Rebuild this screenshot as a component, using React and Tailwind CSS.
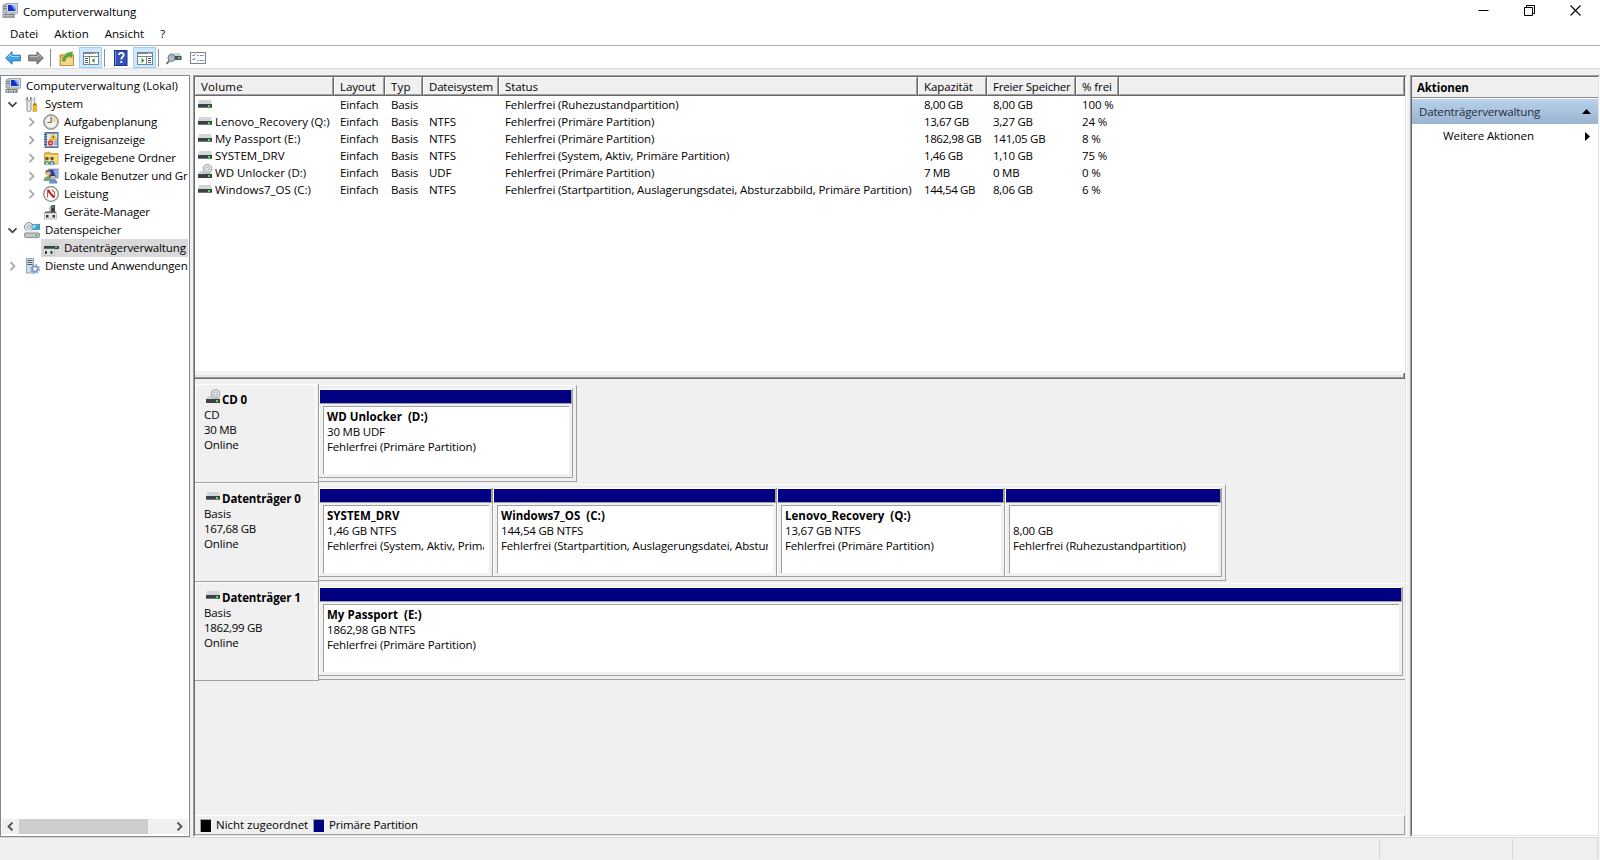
const menuItems = ["Datei", "Aktion", "Ansicht", "?"]

const treeItems = [
  { label: "System", icon: "tools", level: 1, state: "open" },
  { label: "Aufgabenplanung", icon: "clock", level: 2, state: "closed" },
  { label: "Ereignisanzeige", icon: "events", level: 2, state: "closed" },
  { label: "Freigegebene Ordner", icon: "shared", level: 2, state: "closed" },
  { label: "Lokale Benutzer und Gruppen", icon: "users", level: 2, state: "closed" },
  { label: "Leistung", icon: "gauge", level: 2, state: "closed" },
  { label: "Geräte-Manager", icon: "device", level: 2 },
  { label: "Datenspeicher", icon: "storage", level: 1, state: "open" },
  { label: "Datenträgerverwaltung", icon: "diskmgmt", level: 2, selected: true },
  { label: "Dienste und Anwendungen", icon: "services", level: 1, state: "closed" }
]

const columns = [
  { key: "name", label: "Volume", width: "w-[139px]", text: "tracking-[0.01px]", head: "tracking-[0.15px]" },
  { key: "layout", label: "Layout", width: "w-[51px]" },
  { key: "type", label: "Typ", width: "w-[38px]", head: "tracking-[0.2px]" },
  { key: "fs", label: "Dateisystem", width: "w-[76px]", head: "tracking-[-0.2px]" },
  { key: "status", label: "Status", width: "w-[419px]", text: "tracking-[-0.12px]" },
  { key: "capacity", label: "Kapazität", width: "w-[69px]", text: "tracking-[-0.4px]" },
  { key: "free", label: "Freier Speicher", width: "w-[89px]", text: "tracking-[-0.25px]", head: "tracking-[-0.2px]" },
  { key: "percent", label: "% frei", width: "w-[43px]" }
]

const volumes = [
  { name: "", layout: "Einfach", type: "Basis", fs: "", status: "Fehlerfrei (Ruhezustandpartition)", capacity: "8,00 GB", free: "8,00 GB", percent: "100 %" },
  { name: "Lenovo_Recovery (Q:)", layout: "Einfach", type: "Basis", fs: "NTFS", status: "Fehlerfrei (Primäre Partition)", capacity: "13,67 GB", free: "3,27 GB", percent: "24 %" },
  { name: "My Passport (E:)", layout: "Einfach", type: "Basis", fs: "NTFS", status: "Fehlerfrei (Primäre Partition)", capacity: "1862,98 GB", free: "141,05 GB", percent: "8 %" },
  { name: "SYSTEM_DRV", layout: "Einfach", type: "Basis", fs: "NTFS", status: "Fehlerfrei (System, Aktiv, Primäre Partition)", capacity: "1,46 GB", free: "1,10 GB", percent: "75 %" },
  { name: "WD Unlocker (D:)", layout: "Einfach", type: "Basis", fs: "UDF", status: "Fehlerfrei (Primäre Partition)", capacity: "7 MB", free: "0 MB", percent: "0 %", cd: true },
  { name: "Windows7_OS (C:)", layout: "Einfach", type: "Basis", fs: "NTFS", status: "Fehlerfrei (Startpartition, Auslagerungsdatei, Absturzabbild, Primäre Partition)", capacity: "144,54 GB", free: "8,06 GB", percent: "6 %" }
]

const disks = [
  {
    name: "CD 0", type: "CD", size: "30 MB", cd: true, width: "w-[258px] border-r",
    partitions: [
      { name: "WD Unlocker  (D:)", size: "30 MB UDF", status: "Fehlerfrei (Primäre Partition)", width: "w-[254px]" }
    ]
  },
  {
    name: "Datenträger 0", type: "Basis", size: "167,68 GB", width: "w-[907px] border-r",
    partitions: [
      { name: "SYSTEM_DRV", size: "1,46 GB NTFS", status: "Fehlerfrei (System, Aktiv, Primäre Partition)", width: "w-[174px]" },
      { name: "Windows7_OS  (C:)", size: "144,54 GB NTFS", status: "Fehlerfrei (Startpartition, Auslagerungsdatei, Absturzabbild, Primäre Partition)", width: "w-[284px]" },
      { name: "Lenovo_Recovery  (Q:)", size: "13,67 GB NTFS", status: "Fehlerfrei (Primäre Partition)", width: "w-[228px]" },
      { name: "", size: "8,00 GB", status: "Fehlerfrei (Ruhezustandpartition)", width: "w-[217px]" }
    ]
  },
  {
    name: "Datenträger 1", type: "Basis", size: "1862,99 GB", width: "w-[1086px]",
    partitions: [
      { name: "My Passport  (E:)", size: "1862,98 GB NTFS", status: "Fehlerfrei (Primäre Partition)", width: "w-[1084px]" }
    ]
  }
]

function Svg({ children, w = 16, h = 16, className = "" }) {
  return (
    <svg width={w} height={h} viewBox={`0 0 ${w} ${h}`} className={`block shrink-0 ${className}`}>
      {children}
    </svg>
  )
}

function ComputerIcon() {
  return (
    <Svg>
      <path d="M1 2l4-1.500v10l-4-.5z" fill="#b9bec4" stroke="#80868d" strokeWidth=".7" />
      <path d="M1.500 3.500h3M1.500 5.500h3" stroke="#666c72" strokeWidth=".8" />
      <rect x="4.500" y=".5" width="11" height="9.500" fill="#d3d7dc" stroke="#a2a9b1" />
      <rect x="6" y="2" width="8" height="6" fill="#1230c4" />
      <path d="M9 2h5v6h-1z" fill="#6f93f0" />
      <path d="M11 2h3v4z" fill="#b5caff" />
      <path d="M7 10h7l1 1.500H6z" fill="#b5babf" />
      <rect x=".5" y="11" width="12" height="4" fill="#7c858d" />
      <path d="M1.500 12.500h10M1.500 14h10" stroke="#dfe3e6" strokeDasharray="1.500 1" />
      <rect x="9" y="10" width="2" height="1" fill="#d2c04a" />
    </Svg>
  )
}

function DriveIcon({ cd }) {
  return (
    <Svg w={15} h={15}>
      {cd ? (
        <>
          <path d="M2 7h10l2 3H0z" fill="#cfd1d4" />
          <circle cx="9.500" cy="4.800" r="4.300" fill="#dcdfe1" stroke="#9da2a5" />
          <circle cx="9.500" cy="4.800" r="1.700" fill="#fff" stroke="#a6aaad" />
          <rect x="0" y="10" width="14" height="4" fill="#3c4145" />
          <rect x="10" y="11" width="2" height="2" fill="#3df03d" />
        </>
      ) : (
        <>
          <path d="M1 4h12l1 4H0z" fill="#d2d5d9" />
          <rect x="0" y="8" width="14" height="4" fill="#3c4145" />
          <rect x="0" y="11.300" width="14" height=".7" fill="#8a8f93" />
          <rect x="10" y="9" width="2" height="2" fill="#3df03d" />
        </>
      )}
    </Svg>
  )
}

function TreeIcon({ name }) {
  switch (name) {
    case "tools":
      return (
        <Svg>
          <path d="M3.500 1v3l1.500 1L6.500 4V1c1.600.8 2 3.300.5 4.800V14c0 2-4 2-4 0V5.800C1.500 4.300 1.900 1.800 3.500 1z" fill="#e7e9eb" stroke="#7b8085" strokeWidth=".9" />
          <path d="M10.500 1v7" stroke="#a8adb2" strokeWidth="1.500" />
          <rect x="9" y="7.500" width="3.500" height="1.500" fill="#a06d12" />
          <path d="M8.800 9h4l-.5 2 .5 4c-.5 1-3.500 1-4 0l.5-4z" fill="#f4b91e" stroke="#c98d10" strokeWidth=".6" />
        </Svg>
      )
    case "clock":
      return (
        <Svg>
          <circle cx="8" cy="8" r="7.300" fill="#c5c9cc" stroke="#777d82" strokeWidth="1" />
          <circle cx="8" cy="8" r="5.700" fill="#f6f4e6" />
          <path d="M8 8V2.300A5.700 5.700 0 0 1 13.700 8z" fill="#f6d9a0" />
          <path d="M8 3v5.500H4.500" fill="none" stroke="#4d6488" strokeWidth="1.100" />
        </Svg>
      )
    case "events":
      return (
        <Svg>
          <rect x="2" y=".5" width="13" height="15" fill="#7f9cc8" stroke="#5b7297" />
          <rect x="4" y="2" width="10" height="12" fill="#dbe5f4" />
          <path d="M1 2.500h3M1 5h3M1 7.500h3M1 10h3M1 12.500h3" stroke="#4c5a6d" />
          <path d="M10 1.500l4 6.500H6.500z" fill="#ffd530" stroke="#c49a0c" strokeWidth=".6" />
          <path d="M10.200 4v2M10.200 6.700v.7" stroke="#333" />
          <circle cx="7.500" cy="11" r="2.700" fill="#d8362d" />
          <path d="M6.500 10l2 2M8.500 10l-2 2" stroke="#fff" strokeWidth=".7" />
          <path d="M11 10h3M11 12h3" stroke="#5f7aa8" />
        </Svg>
      )
    case "shared":
      return (
        <Svg>
          <path d="M1.500 3l5-1 1 1.500H15V14H1.500z" fill="#e5bd4c" stroke="#b68c25" strokeWidth=".7" />
          <path d="M2.500 5h12v8.500h-12z" fill="#f9dc80" />
          <circle cx="4" cy="8.500" r="1.800" fill="#705034" />
          <path d="M1 14.500c0-5 6-5 6 0z" fill="#4a9c8a" />
          <circle cx="9" cy="8.500" r="1.800" fill="#705034" />
          <path d="M6 14.500c0-5 6-5 6 0z" fill="#3d8fb3" />
          <path d="M3 14l1-2.500L5 14M8 14l1-2.500 1 2.500" fill="#fff" />
        </Svg>
      )
    case "users":
      return (
        <Svg>
          <rect x="5.500" y="1" width="10" height="9" fill="#2443b4" stroke="#b3bcc8" />
          <path d="M10 1.500h5v8h-2z" fill="#89a8ee" />
          <circle cx="5" cy="5" r="2.600" fill="#e0b884" />
          <path d="M2.300 5c-.3-4 5.300-4.500 5.500-1l-3-.5z" fill="#7c552b" />
          <path d="M.5 13c0-6.500 8.500-6.500 8.500 0z" fill="#77a66d" />
          <circle cx="10" cy="8.500" r="2.300" fill="#e4bd8a" />
          <path d="M7.500 8c.2-3 4.500-3 4.800 0z" fill="#4b3a2c" />
          <path d="M6 15.500c0-6.500 8.500-6.500 8.500 0z" fill="#6f8fc6" />
        </Svg>
      )
    case "gauge":
      return (
        <Svg>
          <circle cx="8" cy="8" r="7.300" fill="#fff" stroke="#858585" strokeWidth="1.300" />
          <path d="M4.500 11.500V6L7 4M9 4l2.500 2v5.500" fill="none" stroke="#c65c54" strokeWidth="1.100" />
          <path d="M4.500 4l6.500 7.500" stroke="#d21e18" strokeWidth="2" />
        </Svg>
      )
    case "device":
      return (
        <Svg>
          <path d="M6 3l2-1.500V9H6z" fill="#c4c7ca" />
          <path d="M8 1.500L12 1v8H8z" fill="#3c4145" />
          <rect x="9" y="2.500" width="1.500" height="1.500" fill="#35dd45" />
          <path d="M2.500 7.500h10l1 1.500h-12z" fill="#4c5155" />
          <rect x="1.400" y="9" width="12.200" height="6" fill="#e3e5e7" stroke="#a5aaae" strokeWidth=".7" />
          <rect x="3" y="11" width="2.500" height="2.500" fill="#34383c" />
          <rect x="9.500" y="11" width="2.500" height="2.500" fill="#34383c" />
        </Svg>
      )
    case "storage":
      return (
        <Svg>
          <circle cx="5" cy="5" r="4.500" fill="#dfe2e4" stroke="#8e9499" />
          <circle cx="5" cy="5" r="1.500" fill="#fff" stroke="#8b9094" strokeWidth=".8" />
          <rect x="8" y="2.500" width="7.700" height="5" fill="#32a8dc" stroke="#4b6f84" strokeWidth=".6" />
          <path d="M8.500 3h4l-3 4h-1z" fill="#9bdcf5" />
          <path d="M2 8.500h12l1.500 3H.5z" fill="#eceeef" />
          <rect x=".5" y="11" width="15" height="4.500" rx="1" fill="#c3c7ca" stroke="#767c81" strokeWidth=".8" />
          <rect x="11.500" y="12.500" width="2" height="1.500" fill="#31bb43" />
        </Svg>
      )
    case "diskmgmt":
      return (
        <Svg>
          <path d="M3 3h11l2 3H1z" fill="#cfd2d5" />
          <rect x="1" y="6" width="15" height="3" fill="#3c4145" />
          <rect x="12" y="6.500" width="2" height="1.500" fill="#36e346" />
          <rect x=".5" y="9" width="11" height="6.500" fill="#e3e5e7" stroke="#b5b9bc" strokeWidth=".7" />
          <rect x="2" y="11" width="2" height="3" fill="#34383c" />
          <rect x="7.500" y="11" width="2" height="3" fill="#34383c" />
        </Svg>
      )
    default:
      return (
        <Svg>
          <rect x="2.500" y=".5" width="7" height="14.500" fill="#d6dfe6" stroke="#8293a1" strokeWidth=".8" />
          <path d="M3.500 2.500h5M3.500 4.500h5M3.500 6.500h5" stroke="#4d5a65" />
          <circle cx="11" cy="11" r="4.300" fill="none" stroke="#7ba1c9" strokeWidth="1.300" strokeDasharray="1.700 1.677" />
          <circle cx="11" cy="11" r="2.800" fill="#fff" stroke="#7ba1c9" strokeWidth="2" />
        </Svg>
      )
  }
}

function Expander({ state }) {
  return (
    <Svg w={10} h={10}>
      {state === "open" && <path d="M1.500 3.300l4 4 4-4" fill="none" stroke="#404040" strokeWidth="1.700" />}
      {state === "closed" && <path d="M3.500 1.200l4 4-4 4" fill="none" stroke="#a6a6a6" strokeWidth="1.700" />}
    </Svg>
  )
}

function TitleBar() {
  return (
    <div className="flex h-[23px] shrink-0 items-start pl-0.5">
      <div className="mt-[3px]"><ComputerIcon /></div>
      <div className="ml-[5px] mt-1 flex-1 leading-4 tracking-[-0.02px]">Computerverwaltung</div>
      <div className="mr-[19px] mt-[5px] flex gap-[35px]">
        <Svg w={11} h={11}><path d="M.5 5.500h10" stroke="#000" /></Svg>
        <Svg w={11} h={11}><path d="M.5 2.500h8v8h-8zM2.500 2.500v-2h8v8h-2" fill="none" stroke="#000" /></Svg>
        <Svg w={11} h={11}><path d="M.5.5l10 10M10.500.5l-10 10" stroke="#000" strokeWidth="1.100" /></Svg>
      </div>
    </div>
  )
}

function Separator({ className }) {
  return <div className={`mt-0.5 h-[18px] w-px bg-[#8d8d8d] ${className}`} />
}

function PanelToggle({ right, className }) {
  return (
    <div className={`flex h-[21px] w-[23px] items-end justify-center border border-[#99d1ff] bg-[#cce8ff] pb-0.5 ${className}`}>
      <Svg w={16} h={13}>
        <rect x=".5" y=".5" width="15" height="12" fill="#fff" stroke="#7b838b" />
        <rect x="0" y="0" width="16" height="2" fill="#7b838b" />
        <path d="M1 4.500h14" stroke="#7b838b" />
        <rect x="11" y="1" width="1" height="1" fill="#fff" />
        <rect x="13" y="1" width="1" height="1" fill="#fff" />
        <path d={right ? "M9.500 5v8" : "M6.500 5v8"} stroke="#7b838b" />
        <path d={right ? "M11 6.500h3M11 8.500h3M11 10.500h3" : "M2 6.500h3M2 8.500h3M2 10.500h3"} stroke="#45586d" />
        <path d={right ? "M4.500 6v5l3-2.500z" : "M11.500 6v5l-3-2.500z"} fill="#27a52d" />
      </Svg>
    </div>
  )
}

function Toolbar() {
  return (
    <div className="flex h-[22px] shrink-0 items-start pt-px pl-[5px]">
      <Svg w={16} h={14} className="mt-1">
        <path d="M.7 7L7 .8v3.400h8.300v5.600H7v3.400z" fill="#38a8e8" stroke="#2573aa" />
        <path d="M2.500 6.500L6 3v2.500h8.500" fill="none" stroke="#9bdcff" />
      </Svg>
      <Svg w={16} h={14} className="mt-1 ml-[7px]">
        <path d="M15.300 7L9 .8v3.400H.7v5.600H9v3.400z" fill="#8c8c8c" stroke="#5f5f5f" />
        <path d="M1.500 5.500H10V3l3.500 3.500" fill="none" stroke="#bcbcbc" />
      </Svg>
      <Separator className="ml-1.5" />
      <Svg className="mt-[3px] ml-2">
        <path d="M1 5l5-.5 1 1.500 7.500-1.500v11H1z" fill="#e3b456" stroke="#b07c20" strokeWidth=".8" />
        <path d="M2 8h12v7H2z" fill="#f5d68a" />
        <path d="M3.500 11c0-3 1.500-5 4-5.500L7 3.500 13.500 2l-1.500 5-1.500-1.500C8 6.500 6 8 6 11z" fill="#49b93c" stroke="#26872a" strokeWidth=".6" />
      </Svg>
      <PanelToggle className="ml-1" />
      <Separator className="ml-0.5" />
      <Svg w={14} className="mt-[3px] ml-[9px]">
        <rect x=".5" y=".5" width="12.500" height="15" fill="#3152bd" stroke="#1d3282" />
        <path d="M1.500 1v14" stroke="#8099dc" />
        <path d="M5 5c.3-3 5.300-2.500 4.600.3C9.200 7 7.300 7 7.300 9.500M7.300 11v2" fill="none" stroke="#fff" strokeWidth="1.800" />
      </Svg>
      <PanelToggle right className="ml-[5px]" />
      <Separator className="ml-0.5" />
      <Svg className="mt-[3px] ml-[7px]">
        <path d="M4 3h10l1.500 3H3z" fill="#cfd2d5" />
        <rect x="3" y="6" width="12.500" height="4" fill="#4a5054" />
        <rect x="12" y="7" width="2" height="2" fill="#37df43" />
        <circle cx="5.500" cy="8" r="3.500" fill="#a6bfd0" stroke="#68777f" />
        <path d="M3 11L.5 14" stroke="#5c666c" strokeWidth="1.800" />
      </Svg>
      <Svg w={16} h={12} className="mt-[5px] ml-2">
        <rect x=".5" y=".5" width="15" height="11" fill="#fff" stroke="#7b838b" />
        <path d="M2.500 3l1 1 2-2M2.500 7l1 1 2-2" fill="none" stroke="#356fae" />
        <path d="M7 3.500h2M10 3.500h4M7 8.500h2M10 8.500h4" stroke="#8b949c" />
      </Svg>
    </div>
  )
}

function Tree() {
  return (
    <div className="flex w-[190px] shrink-0 flex-col border border-[#828790] bg-white p-px tracking-[-0.13px]">
      <div className="flex h-[18px] items-center pl-[3px]">
        <ComputerIcon />
        <span className="ml-[5px] whitespace-nowrap tracking-[0.01px]">Computerverwaltung (Lokal)</span>
      </div>
      {treeItems.map((item) => (
        <div key={item.label} className={`flex h-[18px] overflow-hidden ${item.level === 1 ? "pl-[5px]" : "pl-6"}`}>
          <div className="flex w-[15px] shrink-0 items-center">
            <Expander state={item.state} />
          </div>
          <div className={`flex flex-1 items-center pl-0.5 ${item.selected ? "bg-[#d9d9d9]" : ""}`}>
            <TreeIcon name={item.icon} />
            <span className="ml-[5px] whitespace-nowrap">{item.label}</span>
          </div>
        </div>
      ))}
      <div className="mt-auto mb-px flex h-[15px] items-center bg-[#f0f0f0]">
        <Svg w={17} h={9}><path d="M10.500.5l-4 4 4 4" fill="none" stroke="#505050" strokeWidth="1.800" /></Svg>
        <div className="h-full w-[129px] bg-[#cdcdcd]" />
        <div className="flex-1" />
        <Svg w={17} h={9}><path d="M6.500.5l4 4-4 4" fill="none" stroke="#505050" strokeWidth="1.800" /></Svg>
      </div>
    </div>
  )
}

function HeaderCell({ label, width, head = "" }) {
  return (
    <div className={`h-[19px] border-r border-b border-[#696969] ${width}`}>
      <div className={`h-full border-t border-l border-r border-b border-t-white border-l-white border-r-[#a0a0a0] border-b-[#a0a0a0] bg-[#f0f0f0] pl-[5px] leading-[18px] whitespace-nowrap ${head}`}>
        {label}
      </div>
    </div>
  )
}

function VolumeList() {
  return (
    <div className="h-[294px] shrink-0 bg-white">
      <div className="flex">
        {columns.map((column) => (
          <HeaderCell key={column.key} label={column.label} width={column.width} head={column.head} />
        ))}
        <HeaderCell width="flex-1" />
      </div>
      {volumes.map((volume) => (
        <div key={volume.name} className="flex h-[17px] leading-[17px] whitespace-nowrap">
          {columns.map((column) => (
            <div key={column.key} className={`flex shrink-0 ${column.width} ${column.text || ""} ${column.key === "name" ? "pl-[3px]" : "pl-1.5"}`}>
              {column.key === "name" && <div className="mr-0.5"><DriveIcon cd={volume.cd} /></div>}
              {volume[column.key]}
            </div>
          ))}
        </div>
      ))}
    </div>
  )
}

function Partition({ partition }) {
  return (
    <div className={`flex shrink-0 flex-col border-r border-b border-[#a0a0a0] ${partition.width}`}>
      <div className="h-[15px] border-t border-r border-b border-l border-t-white border-r-[#a0a0a0] border-b-[#a0a0a0] border-l-white bg-[#000080]" />
      <div className="flex flex-1 border-l border-white pt-0.5 pr-[3px] pb-[3px] pl-[3px]">
        <div className="w-full overflow-hidden border-t border-l border-[#a0a0a0] bg-white pt-[2px] pl-[3px] leading-[15px] tracking-[-0.14px] whitespace-pre">
          <div className="h-[15px] font-bold tracking-[0.03px]">{partition.name}</div>
          <div className="tracking-[-0.2px]">{partition.size}</div>
          <div className="mr-[5px] overflow-hidden">{partition.status}</div>
        </div>
      </div>
    </div>
  )
}

function DiskRow({ disk }) {
  return (
    <div className="flex h-[99px] shrink-0">
      <div className="flex w-[124px] shrink-0 border-r border-b border-[#a0a0a0]">
        <div className="w-[121px] border-t border-r border-l border-white pl-2 leading-[15px]">
          <div className="flex h-[22px] items-end font-bold">
            <div className={disk.cd ? "mr-[3px] mb-[3px] ml-0.5" : "mr-[3px] mb-[3px] ml-0.5"}><DriveIcon cd={disk.cd} /></div>
            <span className="-ml-0.5 whitespace-nowrap">{disk.name}</span>
          </div>
          <div>{disk.type}</div>
          <div className="tracking-[-0.3px]">{disk.size}</div>
          <div>Online</div>
        </div>
      </div>
      <div className={`mt-px mb-px flex border-t border-b border-t-white border-r-[#a0a0a0] border-b-[#a0a0a0] pt-[3px] pb-[3px] ${disk.width}`}>
        {disk.partitions.map((partition) => (
          <Partition key={partition.size} partition={partition} />
        ))}
      </div>
    </div>
  )
}

function Legend() {
  return (
    <div className="mt-auto flex h-5 items-center border-t border-r border-b border-t-white border-r-[#a0a0a0] border-b-[#a0a0a0] pl-[5px]">
      <div className="h-[13px] w-[11px] border-t border-l border-[#a0a0a0] bg-black" />
      <span className="ml-[5px] w-[97px] tracking-[-0.03px]">Nicht zugeordnet</span>
      <div className="h-[13px] w-[11px] border-t border-l border-[#a0a0a0] bg-[#000080]" />
      <span className="ml-[5px] tracking-[-0.16px]">Primäre Partition</span>
    </div>
  )
}

function DiskPane() {
  return (
    <div className="ml-[3px] flex w-[1214px] shrink-0 border border-t-[#a0a0a0] border-r-white border-b-white border-l-[#a0a0a0]">
      <div className="flex w-full flex-col border border-t-[#696969] border-r-[#e3e3e3] border-b-[#e3e3e3] border-l-[#696969]">
        <VolumeList />
        <div className="mt-0.5 h-1.5 shrink-0 border-r border-b border-[#696969]">
          <div className="h-full border-t border-r border-b border-t-white border-r-[#a0a0a0] border-b-[#a0a0a0] bg-[#e8e8e8]" />
        </div>
        <div className="mt-[5px]">
          {disks.map((disk) => (
            <DiskRow key={disk.name} disk={disk} />
          ))}
        </div>
        <Legend />
      </div>
    </div>
  )
}

function ActionsPane() {
  return (
    <div className="ml-[3px] flex w-[190px] border border-t-[#a0a0a0] border-r-white border-b-white border-l-[#a0a0a0]">
      <div className="w-full border border-t-[#696969] border-r-[#e3e3e3] border-b-[#e3e3e3] border-l-[#696969] bg-white">
        <div className="h-[21px] border-t border-b border-t-white border-b-[#8c8c8c] bg-[#f0f0f0] pl-[5px] leading-[20px] font-bold">
          Aktionen
        </div>
        <div className="mt-px flex h-[25px] items-center justify-between bg-linear-to-b from-[#b9d1ea] to-[#99b4d1] pr-[7px] pl-[7px] tracking-[-0.16px] text-[#1e2a3c]">
          <span>Datenträgerverwaltung</span>
          <Svg w={9} h={5}><path d="M4.500 0L9 5H0z" fill="#000" /></Svg>
        </div>
        <div className="flex h-6 items-center justify-between pr-2 pl-[31px]">
          <span>Weitere Aktionen</span>
          <Svg w={5} h={9}><path d="M0 0v9l5-4.500z" fill="#000" /></Svg>
        </div>
      </div>
    </div>
  )
}

function StatusBar() {
  return (
    <div className="flex flex-1 border-t border-[#d7d7d7] bg-[#f0f0f0] pt-px pb-px">
      <div className="w-[1380px] border-r border-[#d7d7d7]" />
      <div className="w-[133px] border-r border-[#d7d7d7]" />
      <div className="w-[85px] border-r border-[#d7d7d7]" />
    </div>
  )
}

export default function App() {
  return (
    <div className="flex h-[860px] w-[1600px] flex-col overflow-hidden bg-white font-['Open_Sans',sans-serif] text-[11.5px] tracking-[-0.1px] text-black">
      <TitleBar />
      <div className="flex h-[22px] shrink-0 gap-4 pl-2.5 leading-[22px] tracking-[0.02px]">
        {menuItems.map((item) => (
          <span key={item}>{item}</span>
        ))}
      </div>
      <div className="h-px shrink-0 bg-[#afafb4]" />
      <Toolbar />
      <div className="flex h-[769px] shrink-0 border-t border-[#dcdcdc] bg-[#f0f0f0] pt-1.5">
        <Tree />
        <DiskPane />
        <ActionsPane />
      </div>
      <StatusBar />
    </div>
  )
}
